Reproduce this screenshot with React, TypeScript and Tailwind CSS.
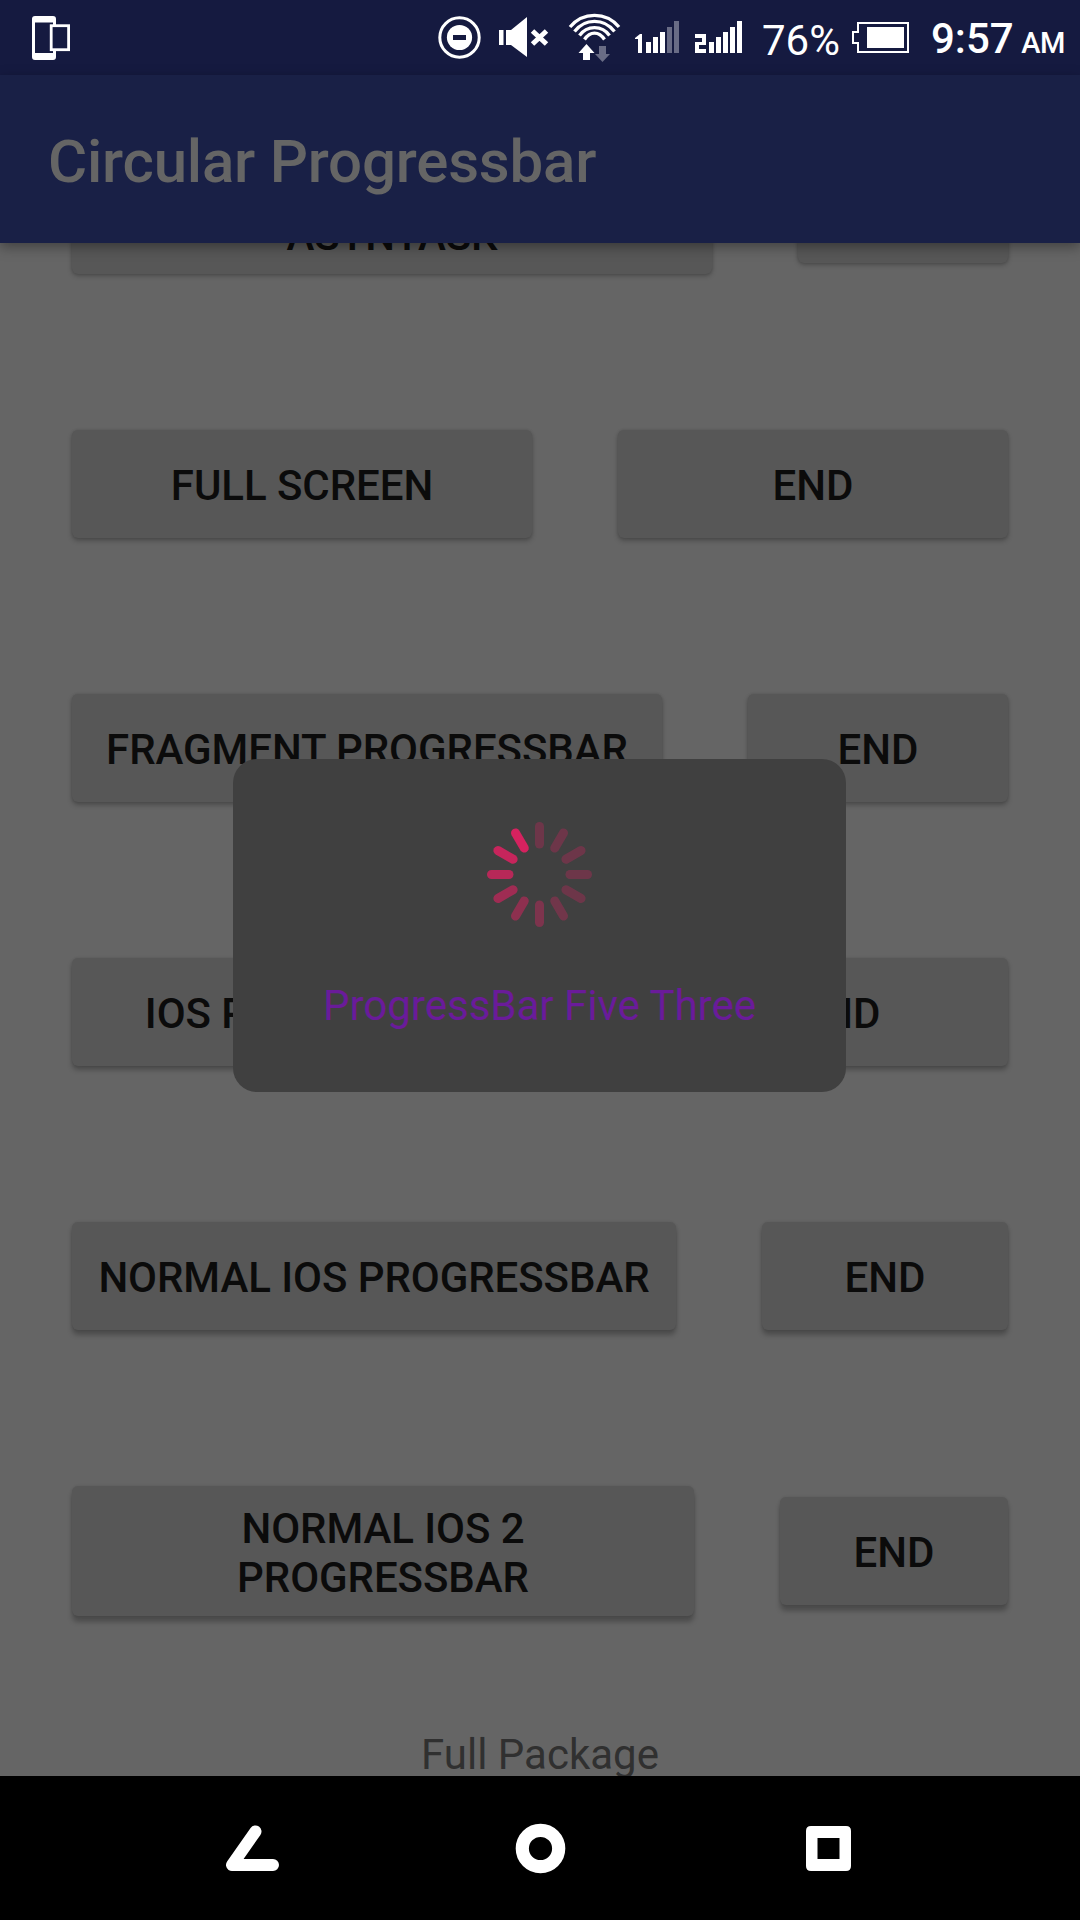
import React from "react";

type Row = {
  label: string;
  row: string;
  left: string;
  shadow: string;
};

const rows: Row[] = [
  {
    label: "FULL SCREEN",
    row: "h-[108px] mb-[156px]",
    left: "w-[460px] h-[108px]",
    shadow: "shadow-[0_3px_5px_rgba(0,0,0,0.24),0_0_3px_rgba(0,0,0,0.14)]",
  },
  {
    label: "FRAGMENT PROGRESSBAR",
    row: "h-[108px] mb-[156px]",
    left: "w-[590px] h-[108px]",
    shadow: "shadow-[0_3px_5px_rgba(0,0,0,0.25),0_0_3px_rgba(0,0,0,0.14)]",
  },
  {
    label: "IOS PROGRESSBAR",
    row: "h-[108px] mb-[156px]",
    left: "w-[514px] h-[108px]",
    shadow: "shadow-[0_4px_5px_rgba(0,0,0,0.25),0_0_3px_rgba(0,0,0,0.12)]",
  },
  {
    label: "NORMAL IOS PROGRESSBAR",
    row: "h-[108px] mb-[156px]",
    left: "w-[604px] h-[108px]",
    shadow: "shadow-[0_5px_5px_rgba(0,0,0,0.25),0_0_3px_rgba(0,0,0,0.12)]",
  },
  {
    label: "NORMAL IOS 2 PROGRESSBAR",
    row: "h-[130px]",
    left: "w-[622px] h-[130px] px-[120px]",
    shadow: "shadow-[0_6px_5px_rgba(0,0,0,0.25),0_0_3px_rgba(0,0,0,0.12)]",
  },
];

function RaisedButton({ children, className }: { children: React.ReactNode; className: string }) {
  return (
    <button
      className={`flex items-center justify-center rounded-[6px] bg-[#575757] text-center text-[42px] leading-[49px] font-medium tracking-[-0.06px] text-[#0b0b0b] ${className}`}
    >
      <span className="relative top-[1.5px]">{children}</span>
    </button>
  );
}

function StatusIcons() {
  return (
    <svg width="330" height="75" viewBox="430 0 330 75" className="shrink-0" fill="#fff">
      <circle cx="459.5" cy="37.5" r="19.7" fill="none" stroke="#fff" strokeWidth="3" />
      <circle cx="459.5" cy="37.5" r="12.6" />
      <rect x="453" y="35" width="13" height="5" fill="#151a40" />

      <path d="M499 30h4.500v15H499zM506 30h5l16-13v40l-16-12h-5z" />
      <path d="M532.500 31l14 13M546.500 31l-14 13" stroke="#fff" strokeWidth="5" />

      <g fill="none" stroke="#fff" strokeWidth="3.300">
        <path d="M570 27C583 11.500 606 11.500 619 27" />
        <path d="M574.500 31.500C585 18 604 18 614.500 31.500" />
        <path d="M579.500 35.500C587 25 602 25 609.500 35.500" />
        <path d="M584.500 39.500C590 31 599 31 604.500 39.500" />
      </g>
      <path d="M586.500 44l8 9h-4.500v7h-7v-7h-4.500z" />
      <path d="M602.500 62l-7.500-8h4v-8h7v8h4z" fill="#696c85" />

      <path d="M635 38l5-4h2v19h-4V39h-3z" />
      <path d="M646 42h5v11h-5zM653 37h5v16h-5zM660 32h5v21h-5z" />
      <path d="M667 27h5v26h-5zM674 21h5v32h-5z" fill="#696c85" />

      <path d="M695 34h11v11h-7v4h7v4h-11V42h7v-4h-7z" />
      <path d="M709 42h5v11h-5zM716 37h5v16h-5zM723 32h5v21h-5zM730 27h5v26h-5zM737 21h5v32h-5z" />
    </svg>
  );
}

function Spinner() {
  const opacities = [0.27, 0.27, 0.27, 0.27, 0.27, 0.29, 0.36, 0.46, 0.57, 0.7, 0.8, 0.88];
  return (
    <svg width="108" height="108" viewBox="-53.5 -53.5 108 108" className="blur-[0.7px]">
      {opacities.map((opacity, i) => (
        <line
          key={i}
          x1="0"
          y1="-48"
          x2="0"
          y2="-30.5"
          stroke="#e91e63"
          strokeOpacity={opacity}
          strokeWidth="9"
          strokeLinecap="round"
          transform={`rotate(${i * 30})`}
        />
      ))}
    </svg>
  );
}

export default function App() {
  return (
    <div className="relative flex h-[1920px] w-[1080px] flex-col overflow-hidden bg-[#656565] font-['Roboto',sans-serif]">
      <header className="flex h-[75px] shrink-0 items-center bg-[#151a40] text-white">
        <svg width="50" height="75" viewBox="25 0 50 75" className="ml-[25px]">
          <path
            fillRule="evenodd"
            fill="#fff"
            d="M35 16h18q3 0 3 3v38q0 3-3 3H35q-3 0-3-3V19q0-3 3-3zM35 22.500v30.500h18V22.500z"
          />
          <rect x="51.200" y="25.700" width="17.400" height="24" fill="#151a40" stroke="#fff" strokeWidth="2.800" />
        </svg>
        <div className="ml-[355px] flex items-center">
          <StatusIcons />
          <span className="relative top-[3px] w-[90px] pl-[2px] text-[42px] leading-[49px]">76%</span>
          <svg width="60" height="75" viewBox="850 0 60 75" className="shrink-0">
            <path d="M858 23h50v29h-50v-9h-5V32h5z" fill="none" stroke="#fff" strokeWidth="2" />
            <rect x="867" y="27" width="37" height="21" fill="#fff" />
          </svg>
          <span className="relative top-[3px] ml-[21px] w-[148px] text-[42px] leading-[49px] font-medium whitespace-nowrap">
            9:57<span className="ml-[7.5px] text-[29px] tracking-[-0.4px]">AM</span>
          </span>
        </div>
      </header>

      <div className="z-10 flex h-[168px] shrink-0 items-center bg-[#192046] pl-[48px] shadow-[0_4px_12px_rgba(0,0,0,0.36)]">
        <h1 className="relative top-[3px] text-[60px] leading-[70px] font-medium tracking-[-0.2px] text-[#656565]">
          Circular Progressbar
        </h1>
      </div>

      <main className="h-[1533px] shrink-0 overflow-hidden px-[72px]">
        <div className="-mt-[99px] mb-[156px] flex h-[130px] items-center gap-[86px]">
          <RaisedButton className="h-[130px] w-[640px] pt-[49px] shadow-[0_2px_5px_rgba(0,0,0,0.24),0_0_3px_rgba(0,0,0,0.14)]">
            ASYNTASK
          </RaisedButton>
          <RaisedButton className="h-[108px] flex-1 shadow-[0_2px_5px_rgba(0,0,0,0.24),0_0_3px_rgba(0,0,0,0.14)]">
            END
          </RaisedButton>
        </div>
        {rows.map((r) => (
          <div key={r.label} className={`flex items-center gap-[86px] ${r.row}`}>
            <RaisedButton className={`${r.left} ${r.shadow}`}>{r.label}</RaisedButton>
            <RaisedButton className={`h-[108px] flex-1 ${r.shadow}`}>END</RaisedButton>
          </div>
        ))}
        <p className="mt-[114px] text-center text-[42px] leading-[49px] text-[#303030]">Full Package</p>
      </main>

      <nav className="h-[144px] shrink-0 bg-black">
        <svg width="1080" height="144" viewBox="0 1776 1080 144">
          <path d="M255.500 1831.500L232 1865h41" fill="none" stroke="#fff" strokeWidth="12" strokeLinecap="round" strokeLinejoin="round" />
          <circle cx="540.500" cy="1848.500" r="18.200" fill="none" stroke="#fff" strokeWidth="13.200" />
          <path
            fill="#fff"
            fillRule="evenodd"
            d="M811 1826h35q5 0 5 5v35q0 5-5 5h-35q-5 0-5-5v-35q0-5 5-5zM817.500 1838v21h22v-21z"
          />
        </svg>
      </nav>

      <div
        role="dialog"
        className="absolute top-[759px] left-[233px] z-20 flex h-[333px] w-[613px] flex-col items-center rounded-[24px] bg-[#404040] pt-[62px]"
      >
        <Spinner />
        <p className="mt-[52px] text-[42px] leading-[49px] text-[#6a1b9a]">ProgressBar Five Three</p>
      </div>
    </div>
  );
}
